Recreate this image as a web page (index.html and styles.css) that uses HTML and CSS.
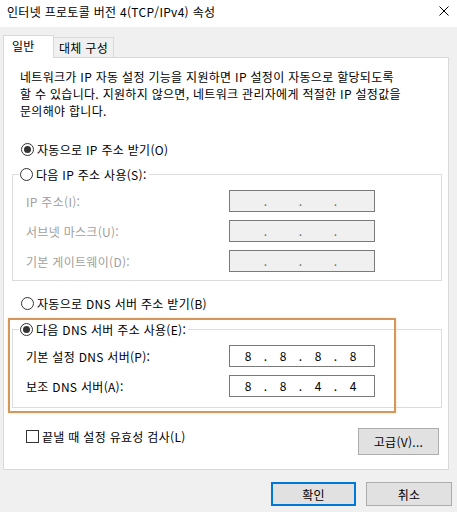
FILE: index.html
```html
<!DOCTYPE html>
<html lang="ko">
<head>
<meta charset="utf-8">
<link rel="stylesheet" href="styles.css">
</head>
<body>
<div class="window">
  <div class="titlebar">
    <span class="title">인터넷 프로토콜 버전 4(TCP/IPv4) 속성</span>
    <svg class="close" width="10" height="10" viewBox="0 0 10 10"><path d="M0.5 0.5 L9.5 9.5 M9.5 0.5 L0.5 9.5" stroke="#000" stroke-width="1" fill="none"/></svg>
  </div>
  <div class="tabs">
    <div class="tab active">일반</div>
    <div class="tab">대체 구성</div>
  </div>
  <div class="panel">
    <p class="desc">네트워크가 IP 자동 설정 기능을 지원하면 IP 설정이 자동으로 할당되도록<br>할 수 있습니다. 지원하지 않으면, 네트워크 관리자에게 적절한 IP 설정값을<br>문의해야 합니다.</p>

    <div class="radio-row first"><span class="radio checked"></span>자동으로 IP 주소 받기(O)</div>

    <fieldset class="group group-ip">
      <legend class="legend"><span class="radio"></span>다음 IP 주소 사용(S):</legend>
      <div class="fields">
        <span class="label disabled">IP 주소(I):</span>
        <div class="ipbox off"><span class="seg"></span><span class="dot">.</span><span class="seg"></span><span class="dot">.</span><span class="seg"></span><span class="dot">.</span><span class="seg"></span></div>
        <span class="label disabled">서브넷 마스크(U):</span>
        <div class="ipbox off"><span class="seg"></span><span class="dot">.</span><span class="seg"></span><span class="dot">.</span><span class="seg"></span><span class="dot">.</span><span class="seg"></span></div>
        <span class="label disabled">기본 게이트웨이(D):</span>
        <div class="ipbox off"><span class="seg"></span><span class="dot">.</span><span class="seg"></span><span class="dot">.</span><span class="seg"></span><span class="dot">.</span><span class="seg"></span></div>
      </div>
    </fieldset>

    <div class="radio-row dns-auto"><span class="radio"></span>자동으로 DNS 서버 주소 받기(B)</div>

    <fieldset class="group group-dns">
      <legend class="legend"><span class="radio checked"></span>다음 DNS 서버 주소 사용(E):</legend>
      <div class="fields">
        <span class="label">기본 설정 DNS 서버(P):</span>
        <div class="ipbox"><span class="seg">8</span><span class="dot">.</span><span class="seg">8</span><span class="dot">.</span><span class="seg">8</span><span class="dot">.</span><span class="seg">8</span></div>
        <span class="label">보조 DNS 서버(A):</span>
        <div class="ipbox"><span class="seg">8</span><span class="dot">.</span><span class="seg">8</span><span class="dot">.</span><span class="seg">4</span><span class="dot">.</span><span class="seg">4</span></div>
      </div>
    </fieldset>

    <div class="check-row">
      <span class="checkbox"></span><span class="check-text">끝낼 때 설정 유효성 검사(L)</span>
      <button class="btn adv">고급(V)...</button>
    </div>

    <div class="highlight"></div>
  </div>
  <div class="footer">
    <button class="btn ok">확인</button>
    <button class="btn cancel">취소</button>
  </div>
</div>
</body>
</html>
```

FILE: styles.css
```css
* { box-sizing: border-box; }
html, body {
  margin: 0;
  padding: 0;
}
body {
  width: 457px;
  height: 512px;
  background: #f0f0f0;
  font-family: "Noto Sans CJK KR", "Noto Sans", sans-serif;
  font-size: 12px;
  line-height: 17px;
  letter-spacing: 0.3px;
  color: #000;
  overflow: hidden;
}
.window {
  width: 457px;
  height: 512px;
  display: flex;
  flex-direction: column;
}
.titlebar {
  height: 27px;
  background: #fff;
  display: flex;
  align-items: flex-start;
  justify-content: space-between;
  padding: 3px 8px 0 7px;
}
.close {
  margin-top: 3px;
}
.tabs {
  margin-top: 8px;
  height: 22px;
  padding-left: 3px;
  display: flex;
  align-items: flex-end;
}
.tab {
  height: 20px;
  padding: 1px 0 0 5px;
  width: 60px;
  border: 1px solid #d9d9d9;
  border-left: none;
  border-bottom: none;
  background: #f0f0f0;
  white-space: nowrap;
}
.tab.active {
  height: 23px;
  width: 51px;
  padding: 1px 0 0 8px;
  margin-bottom: -1px;
  border-left: 1px solid #d9d9d9;
  background: #fff;
  position: relative;
  z-index: 1;
}
.panel {
  position: relative;
  height: 413px;
  margin: 0 8px 0 3px;
  border: 1px solid #d9d9d9;
  background: #fff;
  display: flex;
  flex-direction: column;
}
.desc {
  margin: 10px 0 0 16px;
  white-space: nowrap;
}
.radio-row {
  display: flex;
  align-items: center;
  padding-left: 17px;
  height: 17px;
  white-space: nowrap;
}
.radio-row.first { margin-top: 22px; }
.radio-row.dns-auto { margin-top: 14px; }
.radio {
  width: 13px;
  height: 13px;
  border: 1px solid #333;
  border-radius: 50%;
  margin-right: 3px;
  position: relative;
  flex: none;
  background: #fff;
}
.radio.checked::after {
  content: "";
  position: absolute;
  left: 2px;
  top: 2px;
  width: 7px;
  height: 7px;
  border-radius: 50%;
  background: #333;
}
.group {
  margin: 8px 6px 0 8px;
  padding: 7px 0 8px 6px;
  border: 1px solid #dcdcdc;
  min-width: 0;
}
.group-dns {
  margin-top: 9px;
  padding-bottom: 10px;
}
.legend {
  display: flex;
  align-items: center;
  padding: 0 2px 0 1px;
  height: 17px;
  white-space: nowrap;
}
.fields {
  margin-left: 7px;
  display: grid;
  grid-template-columns: 203px 146px;
  row-gap: 8px;
  align-items: center;
}
.label { white-space: nowrap; }
.label.disabled { color: #a0a0a0; }
.ipbox {
  height: 22px;
  border: 1px solid #7a7a7a;
  background: #fff;
  display: flex;
  align-items: center;
  padding-left: 3px;
  line-height: 20px;
  letter-spacing: 0;
}
.ipbox.off {
  background: #f0f0f0;
  color: #6d6d6d;
}
.seg {
  width: 30px;
  text-align: center;
}
.dot {
  width: 5px;
  text-align: center;
}
.check-row {
  margin-top: 20px;
  display: flex;
  align-items: flex-start;
  padding-left: 22px;
}
.checkbox {
  width: 13px;
  height: 13px;
  border: 1px solid #333;
  background: #fff;
  margin-top: 2px;
  flex: none;
}
.check-text {
  margin-left: 3px;
  white-space: nowrap;
}
.btn {
  font-family: inherit;
  font-size: 12px;
  line-height: 17px;
  letter-spacing: 0.3px;
  color: #000;
  background: #e1e1e1;
  border: 1px solid #adadad;
  padding: 0;
  margin: 0;
}
.adv {
  margin-left: auto;
  margin-right: 9px;
  width: 81px;
  height: 27px;
}
.highlight {
  position: absolute;
  left: 4px;
  top: 260px;
  width: 388px;
  height: 95px;
  border: 2px solid #d4965a;
  box-shadow: 0 0 2px rgba(255, 190, 110, 0.6);
  pointer-events: none;
}
.footer {
  margin-top: 12px;
  display: flex;
  justify-content: flex-end;
  gap: 10px;
  padding-right: 5px;
}
.ok {
  width: 85px;
  height: 24px;
  border: 2px solid #0078d7;
}
.cancel {
  width: 86px;
  height: 24px;
}
```
